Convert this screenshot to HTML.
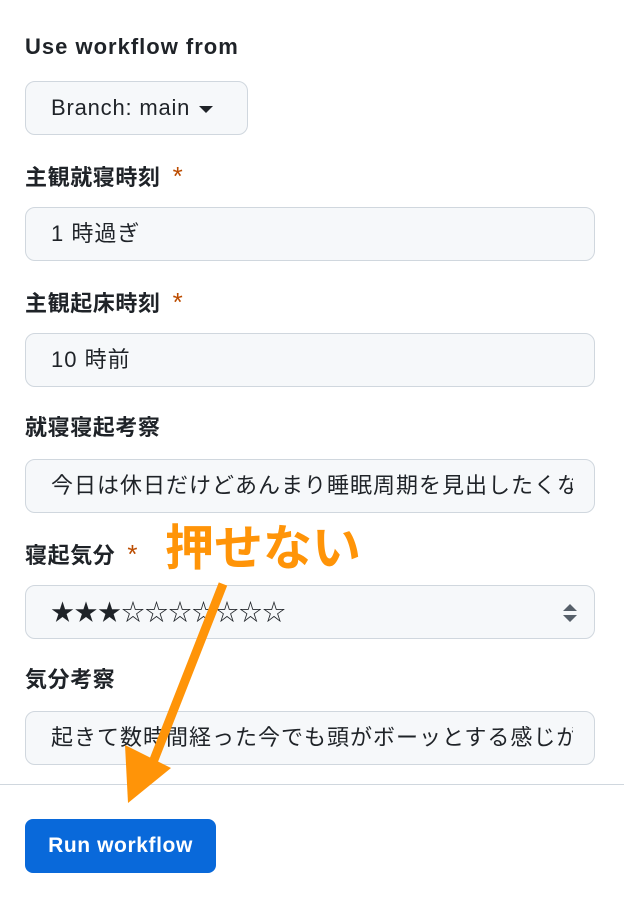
<!DOCTYPE html>
<html><head><meta charset="utf-8"><style>
body{margin:0;width:624px;height:902px;background:#fff;position:relative;overflow:hidden;font-family:"Liberation Sans","Noto Sans CJK JP",sans-serif;color:#1f2328}
.l{position:absolute;left:25px;font-size:22px;font-weight:bold;line-height:26px;letter-spacing:0.6px}
.r{color:#bc4c00;font-weight:normal;margin-left:12px;font-size:26px}
.in{position:absolute;left:25px;border:1px solid #d0d7de;border-radius:10px;background:#f6f8fa;font-size:22px;line-height:52px;padding-left:25px;box-sizing:border-box;width:570px;height:54px;white-space:nowrap;overflow:hidden;letter-spacing:1px}
.clip{display:block;width:522px;overflow:hidden}
</style></head><body>
<div class="l" style="top:34px;letter-spacing:1px">Use workflow from</div>
<div class="in" style="top:81px;width:223px;letter-spacing:0.8px">Branch: main <span style="display:inline-block;border-left:7px solid transparent;border-right:7px solid transparent;border-top:7px solid #1f2328;vertical-align:middle;margin-left:2px"></span></div>
<div class="l" style="top:163px">主観就寝時刻<span class="r">*</span></div>
<div class="in" style="top:207px">1 時過ぎ</div>
<div class="l" style="top:289px">主観起床時刻<span class="r">*</span></div>
<div class="in" style="top:333px">10 時前</div>
<div class="l" style="top:415px">就寝寝起考察</div>
<div class="in" style="top:459px"><span class="clip">今日は休日だけどあんまり睡眠周期を見出したくない</span></div>
<div class="l" style="top:541px">寝起気分<span class="r">*</span></div>
<div class="in" style="top:585px;font-size:23px;letter-spacing:0.5px">★★★☆☆☆☆☆☆☆
<svg style="position:absolute;right:16px;top:17px" width="16" height="20"><path d="M1 8L8 1L15 8Z M1 12L8 19L15 12Z" fill="#57606a"/></svg></div>
<div class="l" style="top:667px">気分考察</div>
<div class="in" style="top:711px"><span class="clip">起きて数時間経った今でも頭がボーッとする感じがある</span></div>
<div style="position:absolute;left:0;top:784px;width:624px;height:1px;background:#d0d7de"></div>
<div style="position:absolute;left:25px;top:819px;width:191px;height:54px;background:#0969da;border-radius:8px;color:#fff;font-size:21px;font-weight:bold;line-height:54px;text-align:center;letter-spacing:0.6px">Run workflow</div>
<div style="position:absolute;left:165px;top:518px;font-size:49px;font-weight:bold;color:#ff9408;line-height:62px">押せない</div>
<svg style="position:absolute;left:0;top:0" width="624" height="902"><line x1="223" y1="584" x2="148" y2="775" stroke="#ff9408" stroke-width="9"/><path d="M128 803L125 745L171 768Z" fill="#ff9408"/></svg>
</body></html>
